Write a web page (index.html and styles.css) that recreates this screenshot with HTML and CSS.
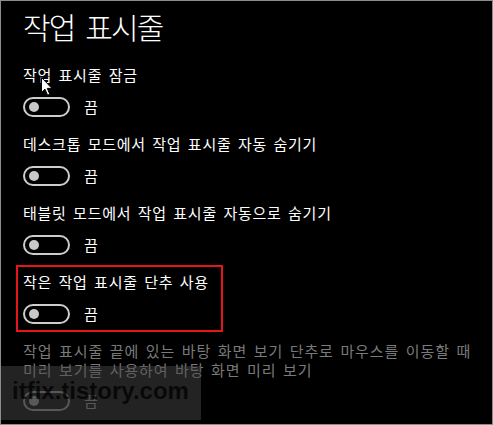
FILE: index.html
```html
<!DOCTYPE html>
<html lang="ko">
<head>
<meta charset="utf-8">
<link rel="stylesheet" href="styles.css">
</head>
<body>
<div class="panel">
  <h1 class="title">작업 표시줄</h1>
  <div class="item">
    <div class="label">작업 표시줄 잠금</div>
    <div class="switch-row"><span class="toggle"><span class="knob"></span></span><span class="state">끔</span></div>
    <svg class="cursor" width="13" height="20" viewBox="0 0 13 20"><path d="M0.5 0.5 L0.5 15.5 L4 12.2 L6.6 18.2 L8.8 17.2 L6.3 11.4 L11 11.4 Z" fill="#fff" stroke="#000" stroke-width="1"/></svg>
  </div>
  <div class="item">
    <div class="label">데스크톱 모드에서 작업 표시줄 자동 숨기기</div>
    <div class="switch-row"><span class="toggle"><span class="knob"></span></span><span class="state">끔</span></div>
  </div>
  <div class="item">
    <div class="label">태블릿 모드에서 작업 표시줄 자동으로 숨기기</div>
    <div class="switch-row"><span class="toggle"><span class="knob"></span></span><span class="state">끔</span></div>
  </div>
  <div class="item highlight">
    <div class="label">작은 작업 표시줄 단추 사용</div>
    <div class="switch-row"><span class="toggle"><span class="knob"></span></span><span class="state">끔</span></div>
  </div>
  <div class="item disabled">
    <div class="desc">작업 표시줄 끝에 있는 바탕 화면 보기 단추로 마우스를 이동할 때<br>미리 보기를 사용하여 바탕 화면 미리 보기</div>
    <div class="switch-row"><span class="toggle"><span class="knob"></span></span><span class="state">끔</span></div>
  </div>
  <div class="watermark"><span>itfix.tistory.com</span></div>
</div>
</body>
</html>
```
FILE: styles.css
```css
html, body {
  margin: 0;
  padding: 0;
  background: #000;
}
.panel {
  position: relative;
  box-sizing: border-box;
  width: 493px;
  height: 425px;
  border: 1px solid #8c8c8c;
  background: #000;
  padding: 0 0 0 22px;
  color: #fff;
  font-family: "Noto Sans CJK KR", "Noto Sans", sans-serif;
  overflow: hidden;
}
.title {
  margin: 5px 0 0 0;
  font-size: 30px;
  line-height: 40px;
  font-weight: 300;
  letter-spacing: -1.8px;
  word-spacing: 4px;
}
.item {
  position: relative;
  margin-top: 19px;
}
.item + .item {
  margin-top: 17px;
}
.label, .desc {
  font-size: 15px;
  line-height: 20px;
  word-spacing: 1.5px;
  letter-spacing: 0.75px;
}
.desc {
  color: #7a7a7a;
  line-height: 19px;
  letter-spacing: 0.9px;
}
.switch-row {
  display: flex;
  align-items: center;
  gap: 14px;
  margin-top: 12px;
  height: 20px;
}
.toggle {
  box-sizing: border-box;
  width: 47px;
  height: 20px;
  border: 2px solid #cdcdcd;
  border-radius: 10px;
  display: flex;
  align-items: center;
  padding-left: 4px;
}
.knob {
  width: 10px;
  height: 10px;
  border-radius: 50%;
  background: #c8c8c8;
}
.state {
  font-size: 15px;
  line-height: 20px;
}
.disabled .toggle {
  border-color: #6a6a6a;
}
.disabled .knob {
  background: #6a6a6a;
}
.disabled .state {
  color: #6a6a6a;
}
.highlight::before {
  content: "";
  position: absolute;
  left: -7px;
  top: -7px;
  width: 207px;
  height: 67px;
  box-sizing: border-box;
  border: 2px solid #e8141c;
}
.cursor {
  position: absolute;
  left: 18px;
  top: 12px;
}
.watermark {
  position: absolute;
  left: 0;
  top: 365px;
  width: 200px;
  height: 54px;
  background: rgba(70, 70, 70, 0.5);
  display: flex;
  align-items: center;
  padding-left: 11px;
  box-sizing: border-box;
}
.watermark span {
  font-family: "Liberation Sans", Arial, sans-serif;
  font-weight: bold;
  font-size: 24px;
  color: rgba(0, 0, 0, 0.75);
  margin-top: -4px;
}
```
